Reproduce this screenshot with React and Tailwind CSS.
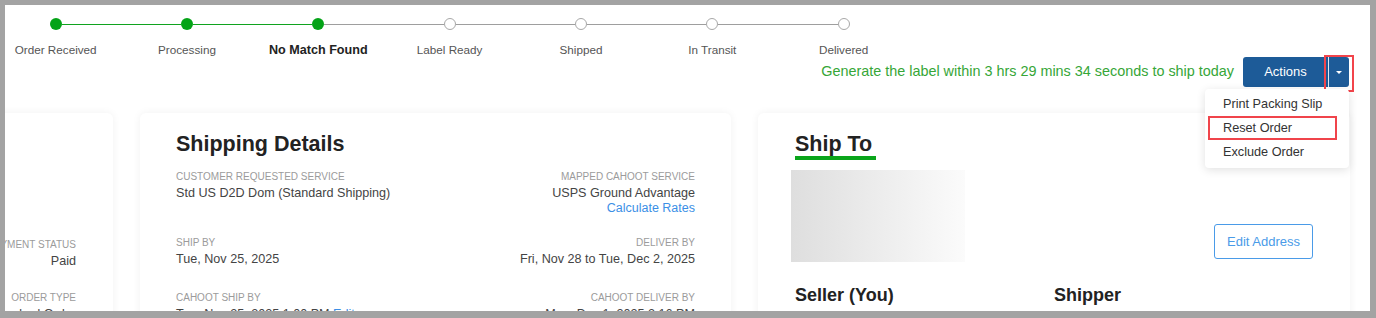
import React from 'react';

const steps = [
  { label: 'Order Received', done: true },
  { label: 'Processing', done: true },
  { label: 'No Match Found', done: true, current: true },
  { label: 'Label Ready', done: false },
  { label: 'Shipped', done: false },
  { label: 'In Transit', done: false },
  { label: 'Delivered', done: false },
];

function Stepper() {
  return (
    <div className="flex -ml-[15px] pt-[13px]">
      {steps.map((s, i) => {
        const leftGreen = i > 0 && s.done;
        const rightGreen = i < steps.length - 1 && steps[i + 1].done;
        return (
          <div key={s.label} className="flex flex-col items-center w-[131.33px]">
            <div className="flex items-center w-full h-[12px]">
              <div className={i === 0 ? 'flex-1' : leftGreen ? 'flex-1 h-px bg-[#10a31f]' : 'flex-1 h-px bg-[#9e9e9e]'} />
              {s.done ? (
                <div className="w-[12px] h-[12px] rounded-full bg-[#04a317]" />
              ) : (
                <div className="w-[12px] h-[12px] rounded-full bg-white border border-[#a8a8a8]" />
              )}
              <div className={i === steps.length - 1 ? 'flex-1' : rightGreen ? 'flex-1 h-px bg-[#10a31f]' : 'flex-1 h-px bg-[#9e9e9e]'} />
            </div>
            <div
              className={
                s.current
                  ? 'mt-[13px] text-[12.6px] leading-[14px] font-bold text-[#222] whitespace-nowrap'
                  : 'mt-[13px] text-[11.7px] leading-[14px] text-[#555] whitespace-nowrap'
              }
            >
              {s.label}
            </div>
          </div>
        );
      })}
    </div>
  );
}

function ActionsMenu() {
  return (
    <div className="relative flex h-[30px]">
      <button className="w-[85px] h-full bg-[#1d5b98] text-white text-[13px] rounded-l-[3px]">Actions</button>
      <div className="w-px h-full bg-[#dfe8f2]" />
      <button className="relative w-[20px] h-full bg-[#1d5b98] rounded-r-[3px] flex items-center justify-center">
        <span className="w-0 h-0 border-l-[3px] border-r-[3px] border-t-[3px] border-l-transparent border-r-transparent border-t-white" />
        <span className="absolute -left-[5px] -top-[2px] w-[30px] h-[37px] border-2 border-[#f2444b]" />
      </button>
      <div className="absolute right-0 top-[32px] z-10 w-[144px] bg-white rounded-[4px] shadow-[0_2px_10px_rgba(0,0,0,0.12)] pt-[3px] pb-[4px] text-[12.7px] text-[#333]">
        <div className="h-[24px] leading-[24px] pl-[18px]">Print Packing Slip</div>
        <div className="h-[24px] leading-[20px] ml-[3px] mr-[12px] pl-[13px] border-2 border-[#f0444b]">Reset Order</div>
        <div className="h-[24px] leading-[24px] pl-[18px]">Exclude Order</div>
      </div>
    </div>
  );
}

function Field({ label, value, right, children }) {
  return (
    <div className={right ? 'flex flex-col items-end text-right' : 'flex flex-col'}>
      <div className="text-[10px] leading-[12px] uppercase text-[#9b9b9b] whitespace-nowrap">{label}</div>
      <div className="mt-[2px] text-[12.6px] leading-[16px] text-[#444] whitespace-nowrap">{value}</div>
      {children}
    </div>
  );
}

function OrderCard() {
  return (
    <div className="w-[591px] shrink-0 bg-white rounded-[6px] shadow-[0_0_8px_rgba(0,0,0,0.06)] pr-[37px] pt-[126px] flex flex-col items-end">
      <Field label="Payment Status" value="Paid" right />
      <div className="mt-[23px]">
        <Field label="Order Type" value="Standard Order" right />
      </div>
    </div>
  );
}

function ShippingCard() {
  return (
    <div className="w-[591px] shrink-0 bg-white rounded-[6px] shadow-[0_0_8px_rgba(0,0,0,0.06)] px-[36px] pt-[19px]">
      <h2 className="text-[21.5px] leading-[24px] font-bold text-[#222]">Shipping Details</h2>
      <div className="mt-[15px] flex justify-between items-start">
        <Field label="Customer Requested Service" value="Std US D2D Dom (Standard Shipping)" />
        <Field label="Mapped Cahoot Service" value="USPS Ground Advantage" right>
          <a className="text-[12.5px] leading-[14px] text-[#3b8fe6]">Calculate Rates</a>
        </Field>
      </div>
      <div className="mt-[22px] flex justify-between items-start">
        <Field label="Ship By" value="Tue, Nov 25, 2025" />
        <Field label="Deliver By" value="Fri, Nov 28 to Tue, Dec 2, 2025" right />
      </div>
      <div className="mt-[25px] flex justify-between items-start">
        <Field
          label="Cahoot Ship By"
          value={
            <>
              Tue, Nov 25, 2025 1:00 PM <span className="text-[#3b8fe6]">Edit</span>
            </>
          }
        />
        <Field label="Cahoot Deliver By" value="Mon, Dec 1, 2025 2:16 PM" right />
      </div>
    </div>
  );
}

function ShipToCard() {
  return (
    <div className="w-[592px] shrink-0 bg-white rounded-[6px] shadow-[0_0_8px_rgba(0,0,0,0.06)] px-[37px] pt-[19px]">
      <h2 className="inline-block text-[21.5px] leading-[24px] font-bold text-[#222] border-b-4 border-[#0aa51b] pr-[4px]">Ship To</h2>
      <div className="mt-[10px] flex justify-between items-end">
        <div className="-ml-[4px] w-[174px] h-[92px] bg-gradient-to-r from-[#dedede] to-[#fbfbfb]" />
        <button className="mb-[3px] w-[99px] h-[35px] rounded-[3px] border border-[#4a9be8] text-[13px] text-[#4a9be8]">
          Edit Address
        </button>
      </div>
      <div className="mt-[23px] grid grid-cols-2">
        <div className="text-[18px] leading-[20px] font-bold text-[#222]">Seller (You)</div>
        <div className="text-[18px] leading-[20px] font-bold text-[#222]">Shipper</div>
      </div>
    </div>
  );
}

export default function App() {
  return (
    <div
      className="w-[1376px] h-[318px] bg-[#a3a3a3] pt-[5px] pl-[5px] pr-[6px] pb-[7px]"
      style={{ fontFamily: '"Liberation Sans", Arial, sans-serif' }}
    >
      <div className="h-full bg-white overflow-hidden">
        <Stepper />
        <div className="flex items-center justify-end gap-[9px] pr-[21px]">
          <div className="text-[14.4px] text-[#36a637]">Generate the label within 3 hrs 29 mins 34 seconds to ship today</div>
          <ActionsMenu />
        </div>
        <div className="mt-[26px] -ml-[483px] flex gap-[27px] h-[300px]">
          <OrderCard />
          <ShippingCard />
          <ShipToCard />
        </div>
      </div>
    </div>
  );
}
